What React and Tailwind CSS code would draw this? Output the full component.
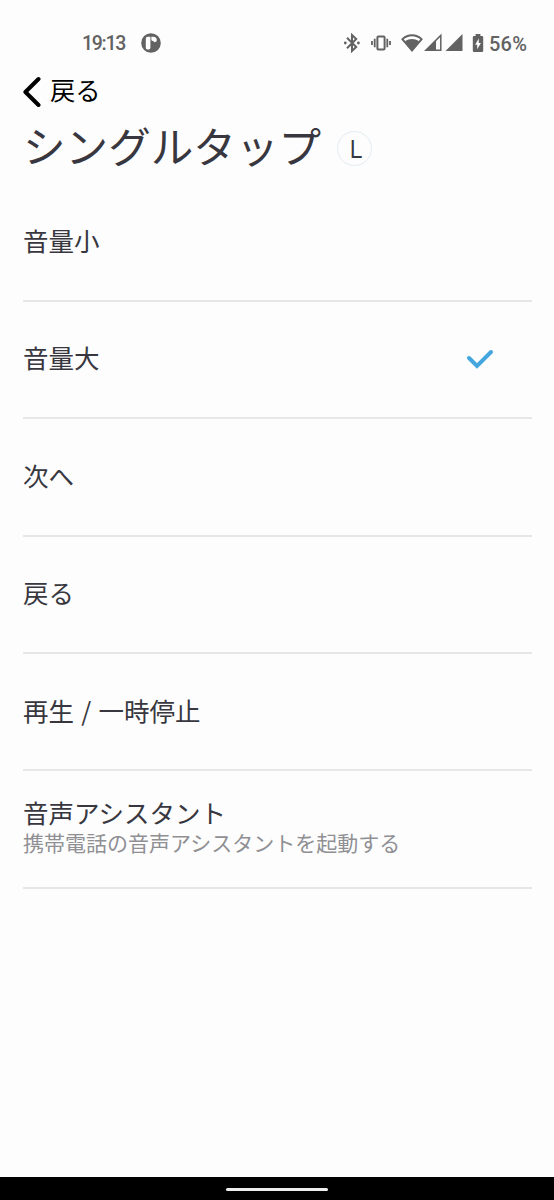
import { useState } from 'react';

const OPTIONS = [
  { id: 'volume-down', label: '音量小' },
  { id: 'volume-up', label: '音量大' },
  { id: 'next', label: '次へ' },
  { id: 'previous', label: '戻る' },
  { id: 'play-pause', label: '再生 / 一時停止' },
  { id: 'assistant', label: '音声アシスタント', note: '携帯電話の音声アシスタントを起動する' },
];

function StatusBar() {
  return (
    <div className="flex h-16 items-end justify-between pl-[82px] pr-[27px] pb-[9px] text-[#626262]">
      <div className="flex h-6 items-center">
        <span className="w-[44px] pt-0.5 whitespace-nowrap font-['Roboto',sans-serif] text-[19.5px] font-medium leading-6 tracking-[-1.3px]">19:13</span>
        {/* Notification */}
        <svg className="ml-[15px]" width="20" height="20" viewBox="0 0 20 20">
          <circle cx="10" cy="10" r="9.8" fill="currentColor" />
          <path d="M6.6 3.8h2.8v11a1.6 1.6 0 0 1-1.6 1.6H6.4a1.6 1.6 0 0 1-1.6-1.6V5.6a1.8 1.8 0 0 1 1.8-1.8z" fill="#fdfdfd" />
          <path d="M10.3 3.8h2a3.5 3.5 0 0 1 3.5 3.5 1.9 1.9 0 0 1-3.6.8 1.9 1.9 0 0 1-1.9-1.9z" fill="#fdfdfd" />
        </svg>
      </div>

      <div className="flex h-6 items-center">
        {/* Bluetooth */}
        <svg width="18" height="20" viewBox="0 0 18 20" fill="none" stroke="currentColor" strokeWidth="2">
          <path d="M4 4.8 13.2 14 9 18V2l4.2 4L4 15.2" />
          <circle cx="2.3" cy="10" r="1.4" fill="currentColor" stroke="none" />
          <circle cx="15.4" cy="10" r="1.4" fill="currentColor" stroke="none" />
        </svg>
        {/* Vibrate */}
        <svg className="ml-2.5" width="20" height="20" viewBox="0 0 20 20" fill="none" stroke="currentColor">
          <rect x="6.4" y="3.5" width="7.2" height="13" rx="1" strokeWidth="2" />
          <path d="M3.7 5.8v8.4M16.3 5.8v8.4M1 8v4M19 8v4" strokeWidth="1.8" />
        </svg>
        {/* Wi-Fi */}
        <svg className="ml-2.5" width="22" height="20" viewBox="0 0 22 20">
          <path d="M1.4 6.2C7 .9 15 .9 20.6 6.2L11 17.7z" fill="none" stroke="currentColor" strokeWidth="1.8" />
          <path d="M4 8.3C8.3 5.2 13.7 5.2 18 8.3L11 17.4z" fill="currentColor" />
        </svg>
        {/* Cell signal */}
        <svg className="ml-px" width="18" height="20" viewBox="0 0 18 20">
          <path d="M1.8 17.2 16.8 2.4v14.8z" fill="none" stroke="currentColor" strokeWidth="1.5" />
          <path d="M1 18 12 7v11z" fill="currentColor" />
        </svg>
        <svg className="ml-[3px]" width="18" height="20" viewBox="0 0 18 20">
          <path d="M.5 18 17.5 1v17z" fill="currentColor" />
        </svg>
        {/* Battery */}
        <svg className="ml-[9px]" width="12" height="20" viewBox="0 0 12 20">
          <path d="M3.6 1h4.8v2H10a1.2 1.2 0 0 1 1.2 1.2v13.6A1.2 1.2 0 0 1 10 19H2a1.2 1.2 0 0 1-1.2-1.2V4.2A1.2 1.2 0 0 1 2 3h1.6z" fill="currentColor" />
          <path d="M6.8 5.5 3.2 11.7h2v4.6L8.9 10h-2.1z" fill="#fdfdfd" />
        </svg>
        <span className="-mr-px ml-[5px] w-[39px] pt-0.5 whitespace-nowrap font-['Roboto',sans-serif] text-[20px] font-medium leading-6 tracking-[0.2px]">56%</span>
      </div>
    </div>
  );
}

function Header() {
  return (
    <header className="h-[119px] px-[23px]">
      <button type="button" className="flex h-[53px] items-center text-black">
        <svg width="18" height="32" viewBox="0 0 18 32" fill="none" stroke="currentColor" strokeWidth="4" strokeLinecap="round" strokeLinejoin="round">
          <path d="M15.5 4 2.4 17 15.5 30" />
        </svg>
        <span className="ml-[9px] pb-1 text-[25.3px] leading-[34px]">戻る</span>
      </button>
      <div className="flex h-[62px] items-center">
        <h1 className="pb-1.5 whitespace-nowrap text-[42.6px] leading-[60px]">シングルタップ</h1>
        <span className="ml-4 flex size-[35px] items-center justify-center rounded-full border border-[#e3ecf1] pl-0.5 font-['Open_Sans',sans-serif] text-[25px] leading-none">L</span>
      </div>
    </header>
  );
}

function OptionRow({ option, selected, onSelect }) {
  return (
    <li className="h-[117.4px] border-b-2 border-[#e7e7e8]">
      <button type="button" onClick={onSelect} className="flex h-full w-full items-center justify-between pr-[38px] text-left">
        <span className="flex flex-col pb-[5px]">
          <span className="text-[25.5px] leading-[31px] [word-spacing:1.6px]">{option.label}</span>
          {option.note && <span className="text-[21px] leading-[31px] text-[#8f8f94]">{option.note}</span>}
        </span>
        {selected && (
          <svg width="28" height="20" viewBox="0 0 28 20" fill="none" stroke="#45a6df" strokeWidth="4" strokeLinecap="round">
            <path d="M3 9 11 17 25 3" />
          </svg>
        )}
      </button>
    </li>
  );
}

export default function App() {
  const [selected, setSelected] = useState('volume-up');

  return (
    <div className="flex h-[1200px] w-[554px] flex-col overflow-hidden bg-[#fdfdfd] font-['Noto_Sans_CJK_JP',sans-serif] text-[#38373f]">
      <StatusBar />
      <Header />
      <ul className="ml-[23px] mr-[22px] flex-1 pt-[1.4px]">
        {OPTIONS.map(option => (
          <OptionRow
            key={option.id}
            option={option}
            selected={selected === option.id}
            onSelect={() => setSelected(option.id)}
          />
        ))}
      </ul>
      {/* Gesture bar */}
      <div className="flex h-[23px] justify-center bg-black pt-[11px]">
        <div className="h-[3px] w-[102px] rounded-full bg-[#eeeeee]" />
      </div>
    </div>
  );
}
